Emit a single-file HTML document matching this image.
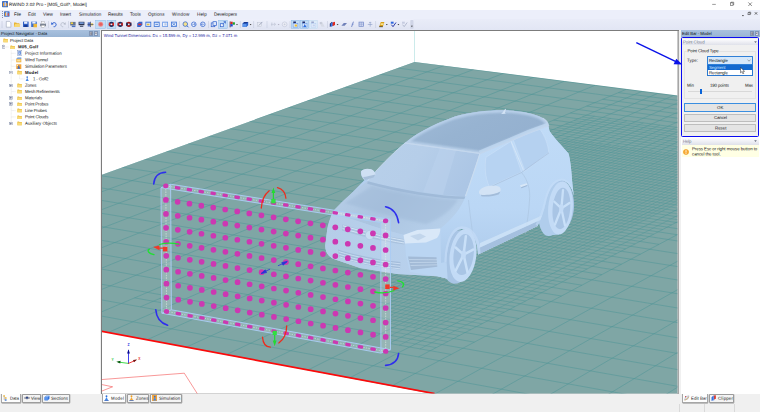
<!DOCTYPE html>
<html><head><meta charset="utf-8"><title>RWIND</title>
<style>
html,body{margin:0;padding:0;}
body{width:760px;height:412px;overflow:hidden;background:#f0f0f0;font-family:"Liberation Sans",sans-serif;position:relative;}
.vp{position:absolute;left:0;top:0;}
.abs{position:absolute;}
.t{position:absolute;white-space:nowrap;text-rendering:geometricPrecision;transform:rotate(0.03deg);}
</style></head><body>
<div class="abs" style="left:0.00px;top:0.00px;width:760.00px;height:9.60px;background:#fff;"></div>
<svg class="abs" style="left:1.8px;top:1.4px" width="6.2" height="6.4" viewBox="0 0 12 12"><rect x="0" y="0" width="12" height="12" rx="1.5" fill="#3f6fc4"/><rect x="2" y="3" width="2.2" height="7" fill="#f0a030"/><rect x="5" y="1.5" width="2.2" height="8.5" fill="#e8e8ff"/><rect x="8" y="4" width="2.2" height="6" fill="#f0a030"/></svg>
<span class="t" style="top:1px;transform:translateY(0.94px) rotate(0.03deg);font-size:4.6px;line-height:5.52px;color:#111;left:9.30px;letter-spacing:0.005px;">RWIND 2.02 Pro - [M05_Golf*, Model]</span>
<svg class="abs" style="left:705px;top:0" width="55" height="9" viewBox="0 0 55 9"><path d="M7.2 4.4H10.8" stroke="#222" stroke-width="0.45"/><rect x="25.3" y="2.9" width="2.7" height="2.7" fill="none" stroke="#222" stroke-width="0.45"/><path d="M26 2.9V2.2H28.7V4.9H28" fill="none" stroke="#222" stroke-width="0.45"/><path d="M43.3 2.4L46.9 6M46.9 2.4L43.3 6" stroke="#222" stroke-width="0.5"/></svg>
<div class="abs" style="left:0.00px;top:9.60px;width:760.00px;height:9.60px;background:#eceffa;"></div>
<div class="abs" style="left:1.60px;top:10.80px;width:0.60px;height:7.00px;border-left:0.5px dotted #8a93b0;"></div>
<svg class="abs" style="left:4.2px;top:11px" width="5.6" height="6" viewBox="0 0 12 12"><rect x="0" y="0" width="12" height="12" rx="1.5" fill="#4a78c8"/><rect x="2" y="3" width="2.2" height="7" fill="#f0a030"/><rect x="5" y="1.5" width="2.2" height="8.5" fill="#f0f0ff"/><rect x="8" y="4" width="2.2" height="6" fill="#e8503a"/></svg>
<span class="t" style="top:11px;transform:translateY(0.84px) rotate(0.03deg);font-size:4.6px;line-height:5.52px;color:#111;left:13.90px;letter-spacing:-0.127px;">File</span>
<span class="t" style="top:11px;transform:translateY(0.84px) rotate(0.03deg);font-size:4.6px;line-height:5.52px;color:#111;left:28.00px;letter-spacing:-0.006px;">Edit</span>
<span class="t" style="top:11px;transform:translateY(0.84px) rotate(0.03deg);font-size:4.6px;line-height:5.52px;color:#111;left:43.00px;letter-spacing:-0.019px;">View</span>
<span class="t" style="top:11px;transform:translateY(0.84px) rotate(0.03deg);font-size:4.6px;line-height:5.52px;color:#111;left:59.80px;letter-spacing:-0.117px;">Insert</span>
<span class="t" style="top:11px;transform:translateY(0.84px) rotate(0.03deg);font-size:4.6px;line-height:5.52px;color:#111;left:78.60px;letter-spacing:0.104px;">Simulation</span>
<span class="t" style="top:11px;transform:translateY(0.84px) rotate(0.03deg);font-size:4.6px;line-height:5.52px;color:#111;left:108.30px;letter-spacing:-0.090px;">Results</span>
<span class="t" style="top:11px;transform:translateY(0.84px) rotate(0.03deg);font-size:4.6px;line-height:5.52px;color:#111;left:130.30px;letter-spacing:-0.007px;">Tools</span>
<span class="t" style="top:11px;transform:translateY(0.84px) rotate(0.03deg);font-size:4.6px;line-height:5.52px;color:#111;left:148.30px;letter-spacing:0.122px;">Options</span>
<span class="t" style="top:11px;transform:translateY(0.84px) rotate(0.03deg);font-size:4.6px;line-height:5.52px;color:#111;left:172.00px;letter-spacing:0.192px;">Window</span>
<span class="t" style="top:11px;transform:translateY(0.84px) rotate(0.03deg);font-size:4.6px;line-height:5.52px;color:#111;left:196.60px;letter-spacing:0.111px;">Help</span>
<span class="t" style="top:11px;transform:translateY(0.84px) rotate(0.03deg);font-size:4.6px;line-height:5.52px;color:#111;left:213.80px;letter-spacing:-0.025px;">Developers</span>
<svg class="abs" style="left:738px;top:10px" width="22" height="8" viewBox="0 0 22 8"><path d="M4 5.6H5.8" stroke="#222" stroke-width="0.7"/><rect x="10" y="2.8" width="2" height="2" fill="none" stroke="#222" stroke-width="0.45"/><path d="M10.7 2.8V2.1H12.7V4.1H12" fill="none" stroke="#222" stroke-width="0.45"/><path d="M16.8 2.2L19.2 4.6M19.2 2.2L16.8 4.6" stroke="#222" stroke-width="0.6"/></svg>
<div class="abs" style="left:0.00px;top:19.20px;width:760.00px;height:10.40px;background:linear-gradient(#e9ecf8,#e2e6f4);"></div>
<div class="abs" style="left:0.00px;top:19.40px;width:414.00px;height:10.00px;background:linear-gradient(#eef0fb,#dfe3f2);border-radius:0 1.5px 1.5px 0;"></div>
<svg class="abs" style="left:0;top:19px" width="420" height="11" viewBox="0 19 420 11"><path d="M2 21V28" stroke="#8a93b0" stroke-width="0.5" stroke-dasharray="0.5 0.5"/><g transform="translate(5.3 21.1)"><path d="M1 0.3H4.2L5.6 1.7V6.1H1Z" fill="#fff" stroke="#7f8aa3" stroke-width="0.45"/></g><g transform="translate(13.8 21.1)"><path d="M0.2 1.4H2.4L3 2.1H5.6V5.8H0.2Z" fill="#e9b537"/><path d="M0.2 5.8L1.4 3H6.6L5.6 5.8Z" fill="#f7d772"/></g><g transform="translate(22.6 21.1)"><rect x="0.4" y="0.5" width="5.6" height="5.4" fill="#2f5fc6"/><rect x="1.5" y="0.5" width="3.3" height="2.2" fill="#e8eefc"/><rect x="1.6" y="3.8" width="3.2" height="2.1" fill="#1a3a90"/></g><g transform="translate(30.8 21.1)"><rect x="0.4" y="0.5" width="5.6" height="5.4" fill="#3b6fd0"/><rect x="1.5" y="0.5" width="3.3" height="2" fill="#e8eefc"/><rect x="2.6" y="2.8" width="3.6" height="3.4" fill="#f0b838"/></g><g transform="translate(39.8 21.1)"><rect x="0.3" y="2.3" width="5.9" height="2.8" rx="0.5" fill="#7b8494"/><rect x="1.5" y="0.6" width="3.5" height="2" fill="#f4f4f8" stroke="#888" stroke-width="0.3"/><rect x="1.5" y="4.2" width="3.5" height="1.9" fill="#fff" stroke="#888" stroke-width="0.3"/></g><path d="M48.5 21V28" stroke="#b4bbd0" stroke-width="0.4"/><g transform="translate(50.8 21.1)"><path d="M1.3 2.6C2.6 0.8 5.6 1.4 5.3 3.8C5.1 5.2 3.8 5.8 2.8 5.6" fill="none" stroke="#2b5fd0" stroke-width="1"/><path d="M0.3 1.2L0.6 3.9L3 2.9Z" fill="#2b5fd0"/></g><g transform="translate(59.8 21.1)"><path d="M5 2.6C3.7 0.8 0.9 1.4 1.1 3.8C1.3 5.2 2.5 5.8 3.4 5.6" fill="none" stroke="#b6bccb" stroke-width="0.9"/><path d="M6 1.2L5.7 3.9L3.3 2.9Z" fill="#b6bccb"/></g><path d="M68.5 21V28" stroke="#b4bbd0" stroke-width="0.4"/><g transform="translate(69.8 21.1)"><rect x="0.4" y="0.8" width="5.4" height="3.6" fill="#6a7890"/><rect x="1" y="1.3" width="2.2" height="1.6" fill="#f0d040"/><rect x="2" y="4.6" width="3.6" height="1.4" fill="#4a70c0"/></g><g transform="translate(78.3 21.1)"><rect x="0.3" y="0.7" width="5.8" height="3.4" fill="#2b3550"/><rect x="1" y="1.2" width="4.4" height="1.6" fill="#7aa0e0"/><rect x="1.6" y="4.5" width="3.4" height="1.4" fill="#596580"/></g><g transform="translate(87.3 21.1)"><rect x="0.4" y="1.2" width="2.4" height="4.2" fill="#5a78c8"/><rect x="3.4" y="2.2" width="2.4" height="2.2" fill="#e8cc58"/><rect x="2.7" y="0.6" width="0.7" height="5.4" fill="#3a4260"/><rect x="0.2" y="2.9" width="6" height="0.6" fill="#3a4260"/></g><rect x="95.7" y="20.2" width="10.099999999999994" height="8.4" fill="#c2dcf5" stroke="#7fb2e4" stroke-width="0.4"/><g transform="translate(97.5 21.1)"><circle cx="3.2" cy="3.2" r="2.5" fill="#ec8a8a"/><circle cx="3.2" cy="3.2" r="1.5" fill="#e66060"/></g><rect x="107" y="20.2" width="8.900000000000006" height="8.4" fill="#c2dcf5" stroke="#7fb2e4" stroke-width="0.4"/><g transform="translate(108.2 21.1)"><circle cx="3.2" cy="3.2" r="2.6" fill="#1c2a5c"/><path d="M3.2 3.2L5.8 1.2L5.8 5.2Z" fill="#d02828"/><path d="M3.2 3.2L0.6 1.2L0.6 5.2Z" fill="#d02828"/><circle cx="3.2" cy="3.2" r="0.9" fill="#e8e8f4"/></g><g transform="translate(117.0 21.1)"><circle cx="3.2" cy="3.2" r="2.6" fill="#1c2a5c"/><path d="M3.2 3.2L5.8 1.2L5.8 5.2Z" fill="#c02020"/><path d="M3.2 3.2L0.6 1.2L0.6 5.2Z" fill="#c02020"/><circle cx="3.2" cy="3.2" r="0.9" fill="#e8e8f4"/></g><g transform="translate(125.60000000000001 21.1)"><circle cx="3.2" cy="3.2" r="2.6" fill="#a01818"/><path d="M3.2 3.2L5.8 1.2L5.8 5.2Z" fill="#1c2a5c"/><path d="M3.2 3.2L0.6 1.2L0.6 5.2Z" fill="#1c2a5c"/><circle cx="3.2" cy="3.2" r="0.9" fill="#e8e8f4"/></g><path d="M134 21V28" stroke="#b4bbd0" stroke-width="0.4"/><g transform="translate(136.60000000000002 21.1)"><path d="M0.6 2.2L2.6 0.6H5.8V4L3.8 5.8H0.6Z" fill="#3a66cc"/><rect x="1.6" y="2.6" width="3.2" height="1.4" fill="#e03030"/></g><g transform="translate(145.0 21.1)"><rect x="0.4" y="0.6" width="5.8" height="5.2" fill="#3e74d6"/><rect x="1.2" y="1.6" width="4.2" height="3.4" fill="#dfe9fb"/><rect x="1.8" y="2.6" width="2.6" height="1.6" fill="#e8c040"/></g><g transform="translate(153.4 21.1)"><rect x="0.4" y="0.6" width="5.8" height="5.2" fill="#3e74d6"/><rect x="1.2" y="1.6" width="4.2" height="3.4" fill="#dfe9fb"/><path d="M2 3.3H4.6" stroke="#3e74d6" stroke-width="0.8"/></g><g transform="translate(161.8 21.1)"><rect x="0.4" y="0.6" width="5.8" height="5.2" fill="#6a98e6"/><rect x="1.2" y="1.6" width="4.2" height="3.4" fill="#eef3fd"/><rect x="2.6" y="2.2" width="2.2" height="2.2" fill="#b8c8e8"/></g><g transform="translate(170.60000000000002 21.1)"><rect x="0.4" y="0.6" width="5.8" height="5.2" fill="#3e74d6"/><rect x="1.2" y="1.4" width="4.2" height="3.6" fill="#e8effc"/><path d="M1.6 1.8L5 4.6M5 1.8L1.6 4.6" stroke="#3e74d6" stroke-width="0.7"/></g><path d="M179.5 21V28" stroke="#b4bbd0" stroke-width="0.4"/><g transform="translate(182.3 21.1)"><circle cx="3" cy="3" r="2.3" fill="#f4e08a" stroke="#3c6cd0" stroke-width="0.8"/><path d="M4.6 4.6L6.2 6.2" stroke="#3c6cd0" stroke-width="1"/></g><g transform="translate(190.60000000000002 21.1)"><circle cx="3.2" cy="3.2" r="2.3" fill="#f0f4fc" stroke="#3c6cd0" stroke-width="0.8"/><path d="M1.6 3.2H4.6M3.4 2L4.8 3.2L3.4 4.4" stroke="#3c6cd0" stroke-width="0.6" fill="none"/></g><g transform="translate(199.60000000000002 21.1)"><circle cx="3.2" cy="3.2" r="2.3" fill="#f0f4fc" stroke="#3c6cd0" stroke-width="0.8"/><path d="M4.8 3.2H1.8M3 2L1.6 3.2L3 4.4" stroke="#3c6cd0" stroke-width="0.6" fill="none"/></g><path d="M208.5 21V28" stroke="#b4bbd0" stroke-width="0.4"/><g transform="translate(210.8 21.1)"><rect x="0.4" y="1.8" width="3.6" height="3.8" fill="none" stroke="#2f62cc" stroke-width="0.7"/><rect x="2.2" y="0.6" width="3.6" height="3.8" fill="#dfe8fa" stroke="#2f62cc" stroke-width="0.7"/></g><rect x="218.5" y="20.2" width="8.800000000000011" height="8.4" fill="#c2dcf5" stroke="#7fb2e4" stroke-width="0.4"/><g transform="translate(219.70000000000002 21.1)"><rect x="0.6" y="2.6" width="3" height="3" fill="#eef3fd" stroke="#2f62cc" stroke-width="0.7"/><path d="M3 3L5.6 0.6M5.8 2.4V0.5H3.9" stroke="#2f62cc" stroke-width="0.7" fill="none"/></g><g transform="translate(229.10000000000002 21.1)"><rect x="0.6" y="0.4" width="0.8" height="5.8" fill="#222"/><rect x="1.4" y="0.6" width="2.2" height="2.4" fill="#e02020"/><rect x="3.6" y="1.2" width="2.2" height="2.4" fill="#18a030"/><rect x="1.4" y="3" width="2.2" height="2.4" fill="#2040d8"/></g><path d="M236.1 24.1H237.9L237 25.2Z" fill="#333"/><path d="M240.3 21V28" stroke="#b4bbd0" stroke-width="0.4"/><g transform="translate(242.20000000000002 21.1)"><path d="M0.4 2.4L2.2 0.8H6V4.2L4.2 5.8H0.4Z" fill="#2d66cf"/><path d="M0.4 2.4H4.2V5.8H0.4Z" fill="#5c95ec"/><path d="M0.4 2.4L2.2 0.8H6L4.2 2.4Z" fill="#16358c"/></g><path d="M249.7 24.1H251.5L250.6 25.2Z" fill="#333"/><path d="M253.6 21V28" stroke="#b4bbd0" stroke-width="0.4"/><g transform="translate(256.8 21.1)"><rect x="0.4" y="1.6" width="4.6" height="4" fill="#e8ebf4" stroke="#b3bacb" stroke-width="0.4"/><path d="M2 4.4L5.6 0.8" stroke="#9aa3ba" stroke-width="0.9"/></g><path d="M267 21V28" stroke="#b4bbd0" stroke-width="0.4"/><g transform="translate(270.40000000000003 21.1)"><path d="M0.6 3.2H5M3.6 1.8L5.2 3.2L3.6 4.6M1.4 1.4V5" stroke="#b9bfd0" stroke-width="0.6" fill="none"/></g><path d="M277.70000000000005 24.1H279.5L278.6 25.2Z" fill="#aab"/><g transform="translate(281.40000000000003 21.1)"><circle cx="3.2" cy="3.2" r="2.4" fill="#eceef6" stroke="#c0c5d6" stroke-width="0.6"/><circle cx="3.2" cy="3.2" r="0.9" fill="#c8cddc"/></g><path d="M290 21V28" stroke="#b4bbd0" stroke-width="0.4"/><rect x="291.2" y="20.2" width="8.400000000000034" height="8.4" fill="#c2dcf5" stroke="#7fb2e4" stroke-width="0.4"/><g transform="translate(292.3 21.1)"><rect x="1" y="0.4" width="2.6" height="1.8" fill="#1c2a6c"/><rect x="0.8" y="2.4" width="4.8" height="3.6" fill="#dbe7fa" stroke="#4a80dc" stroke-width="0.4"/><rect x="2.4" y="3.4" width="2.4" height="2" fill="#f2c230"/></g><rect x="300.3" y="20.2" width="8.300000000000011" height="8.4" fill="#c2dcf5" stroke="#7fb2e4" stroke-width="0.4"/><g transform="translate(301.40000000000003 21.1)"><rect x="1" y="0.4" width="2.6" height="1.8" fill="#1c2a6c"/><rect x="0.8" y="2.4" width="4.8" height="3.6" fill="#dbe7fa" stroke="#4a80dc" stroke-width="0.4"/><path d="M3.4 2.8L5 5.8H1.8Z" fill="#2f6fe0"/></g><rect x="309.4" y="20.2" width="8.0" height="8.4" fill="#dcebf9" stroke="#b9d4ee" stroke-width="0.4"/><g transform="translate(310.3 21.1)"><rect x="1" y="0.4" width="2.6" height="1.8" fill="#9aa6cc"/><rect x="0.8" y="2.4" width="4.8" height="3.6" fill="#e6eefb" stroke="#a8c4ee" stroke-width="0.4"/><rect x="2.4" y="3.4" width="2.2" height="1.8" fill="#c4d4ee"/></g><g transform="translate(318.8 21.1)"><path d="M1 1.4C2 0.4 3.6 0.6 4 1.8L5.8 5.6H2.6Z" fill="#d7dbe6"/><circle cx="2" cy="2" r="1.2" fill="#c5cad8"/></g><path d="M327.5 21V28" stroke="#b4bbd0" stroke-width="0.4"/><g transform="translate(329.2 21.1)"><path d="M0.6 2.6L2.8 0.6V4.4L0.6 6Z" fill="#1c2a6c"/><path d="M1.6 2.4L4 0.6V4.6L1.6 6Z" fill="#3a7be8"/><path d="M3.4 1.4L5.8 0.6V4L3.4 5.2Z" fill="#e02a1c"/></g><path d="M336.70000000000005 24.1H338.5L337.6 25.2Z" fill="#333"/><g transform="translate(341.0 21.1)"><path d="M0.4 4.6L2.8 1.8H6L3.6 4.6Z" fill="#6f80b8"/></g><g transform="translate(349.40000000000003 21.1)"><path d="M2.2 5.8L4 0.6" stroke="#6a80c4" stroke-width="0.9"/><path d="M2.2 3.2H4.4" stroke="#7a90d0" stroke-width="0.5"/></g><g transform="translate(358.2 21.1)"><rect x="0.8" y="1" width="4.6" height="4.2" fill="#d4dcf2" stroke="#7086c6" stroke-width="0.7"/><path d="M3.1 1V5.2M0.8 3.1H5.4" stroke="#7086c6" stroke-width="0.4"/></g><g transform="translate(367.0 21.1)"><path d="M0.8 3.4H5.4M3.2 1V5.6M2 2L3.2 0.8L4.4 2" stroke="#8a9cc8" stroke-width="0.6" fill="none"/></g><path d="M375.6 21V28" stroke="#b4bbd0" stroke-width="0.4"/><g transform="translate(378.6 21.1)"><path d="M0.6 5.6L2.2 0.8H5.8L4.2 5.6Z" fill="#d8a018"/><path d="M2.4 2.2H5.2L4.6 4H1.8Z" fill="#f8e088"/><path d="M0.6 5.6H4.2" stroke="#222" stroke-width="0.7"/></g><path d="M385.90000000000003 24.1H387.7L386.8 25.2Z" fill="#333"/><g transform="translate(390.2 21.1)"><rect x="0.6" y="0.6" width="2.8" height="2" fill="#2d66df"/><path d="M1.2 3.6L2.8 5.6L5.8 1.4" stroke="#2a3aa8" stroke-width="1" fill="none"/></g><path d="M397.5 24.1H399.29999999999995L398.4 25.2Z" fill="#333"/><g transform="translate(401.40000000000003 21.1)"><rect x="0.6" y="0.6" width="2.8" height="2" fill="#c6cce0"/><path d="M1.2 3.6L2.8 5.6L5.8 1.4" stroke="#b4bbd0" stroke-width="1" fill="none"/></g><rect x="410.3" y="20" width="3.2" height="8.8" rx="0.8" fill="#cfd4e6"/><path d="M411 25.8H412.8L411.9 26.9Z" fill="#222"/></svg>
<div class="abs" style="left:0.00px;top:30.20px;width:99.60px;height:364.00px;background:#fff;"></div>
<div class="abs" style="left:0.00px;top:30.20px;width:99.60px;height:6.70px;background:linear-gradient(#a9c1de,#98b4d4);"></div>
<span class="t" style="top:30px;transform:translateY(0.96px) rotate(0.03deg);font-size:4.35px;line-height:5.22px;color:#101820;left:1.40px;letter-spacing:-0.003px;">Project Navigator - Data</span>
<div class="abs" style="left:89.30px;top:31.20px;width:4.20px;height:4.60px;background:#e9eef7;border:0.35px solid #8196b6;box-sizing:border-box;"></div>
<div class="abs" style="left:94.30px;top:31.20px;width:4.20px;height:4.60px;background:#e9eef7;border:0.35px solid #8196b6;box-sizing:border-box;"></div>
<svg class="abs" style="left:89.3px;top:31.2px" width="9.2" height="4.6" viewBox="0 0 9.2 4.6"><path d="M1.7 1V3.2M2.6 1V3.2M1.2 3.2H3.1M2.15 3.2V4" stroke="#223" stroke-width="0.4" fill="none"/><path d="M6.2 1.6L7.8 3M7.8 1.6L6.2 3" stroke="#223" stroke-width="0.45"/></svg>
<svg class="abs" style="left:0;top:37px" width="100" height="95" viewBox="0 37 100 95"><path d="M3.5 49V44M11.2 50.5V123.3M11.2 53.3H16M11.2 60H16M11.2 66.3H16M11.2 91.6H16M11.2 110.6H16M11.2 116.9H16M19.5 75.5V78.9H24.5M3.5 47H9" stroke="#b8b8b8" stroke-width="0.35" stroke-dasharray="0.4 0.4" fill="none"/></svg>
<svg class="abs" style="left:2.60px;top:38.40px" width="5.3" height="4.6" viewBox="0 0 12 10.8"><path d="M0.5 2.2 L0.5 10 L11.3 10 L11.3 2.6 L5.6 2.6 L4.6 1 L1.2 1 Z" fill="#ecc04a"/><path d="M0.5 4 L11.3 4 L11.3 10 L0.5 10 Z" fill="#f8da78"/></svg>
<span class="t" style="top:38px;transform:translateY(0.06px) rotate(0.03deg);font-size:4.35px;line-height:5.22px;color:#111;left:9.60px;letter-spacing:-0.059px;">Project Data</span>
<svg class="abs" style="left:1.70px;top:45.20px" width="3.6" height="3.6" viewBox="0 0 9 9"><rect x="0.6" y="0.6" width="7.8" height="7.8" fill="#fff" stroke="#8390aa" stroke-width="1.2"/><path d="M2 4.5H7" stroke="#2a3560" stroke-width="1.3"/></svg>
<svg class="abs" style="left:9.80px;top:44.70px" width="5.3" height="4.6" viewBox="0 0 12 10.8"><path d="M0.5 2.2 L0.5 10 L11.3 10 L11.3 2.6 L5.6 2.6 L4.6 1 L1.2 1 Z" fill="#ecc04a"/><path d="M0.5 4 L11.3 4 L11.3 10 L0.5 10 Z" fill="#f8da78"/></svg>
<span class="t" style="top:44px;transform:translateY(0.36px) rotate(0.03deg);font-size:4.35px;line-height:5.22px;color:#111;font-weight:bold;left:17.50px;letter-spacing:0.079px;">M05_Golf</span>
<svg class="abs" style="left:16.6px;top:50.4px" width="5.2" height="5.8" viewBox="0 0 10 11"><rect x="0.5" y="0.5" width="9" height="10" fill="#fff" stroke="#7a8fb8" stroke-width="0.9"/><rect x="2.8" y="2" width="4.4" height="7" fill="#3b6fd0"/><rect x="4.4" y="4.5" width="1.2" height="3.6" fill="#fff"/><rect x="4.4" y="2.8" width="1.2" height="1.1" fill="#fff"/></svg>
<span class="t" style="top:50px;transform:translateY(0.66px) rotate(0.03deg);font-size:4.35px;line-height:5.22px;color:#111;left:24.60px;letter-spacing:0.007px;">Project Information</span>
<svg class="abs" style="left:16.4px;top:57.2px" width="5.6" height="5.6" viewBox="0 0 10 10"><rect x="0.5" y="3" width="9" height="6.5" fill="#f0b040"/><path d="M0.5 3L3 0.8H9.5V3Z" fill="#5b8fd8"/><rect x="2" y="4.5" width="6" height="3.5" fill="#fbe3a0"/></svg>
<span class="t" style="top:57px;transform:translateY(0.36px) rotate(0.03deg);font-size:4.35px;line-height:5.22px;color:#111;left:24.60px;letter-spacing:-0.114px;">Wind Tunnel</span>
<svg class="abs" style="left:16.4px;top:63.5px" width="5.6" height="5.6" viewBox="0 0 10 10"><rect x="0.5" y="0.5" width="9" height="9" fill="#f3a338"/><path d="M5 2L7.5 8.5H2.5Z" fill="#3768c8"/><rect x="1.5" y="1.5" width="2" height="2" fill="#fff4d0"/></svg>
<span class="t" style="top:63px;transform:translateY(0.66px) rotate(0.03deg);font-size:4.35px;line-height:5.22px;color:#111;left:24.60px;letter-spacing:-0.103px;">Simulation Parameters</span>
<svg class="abs" style="left:9.40px;top:70.80px" width="3.6" height="3.6" viewBox="0 0 9 9"><rect x="0.6" y="0.6" width="7.8" height="7.8" fill="#fff" stroke="#8390aa" stroke-width="1.2"/><path d="M2 4.5H7" stroke="#2a3560" stroke-width="1.3"/></svg>
<svg class="abs" style="left:17.00px;top:70.30px" width="5.3" height="4.6" viewBox="0 0 12 10.8"><path d="M0.5 2.2 L0.5 10 L11.3 10 L11.3 2.6 L5.6 2.6 L4.6 1 L1.2 1 Z" fill="#ecc04a"/><path d="M0.5 4 L11.3 4 L11.3 10 L0.5 10 Z" fill="#f8da78"/></svg>
<span class="t" style="top:69px;transform:translateY(0.96px) rotate(0.03deg);font-size:4.35px;line-height:5.22px;color:#111;font-weight:bold;left:24.60px;letter-spacing:0.167px;">Model</span>
<svg class="abs" style="left:25.2px;top:76.30000000000001px" width="4.4" height="5.2" viewBox="0 0 8 10"><circle cx="4" cy="2.2" r="1.6" fill="#3b78d8"/><path d="M4 3.5L7 9.5H1Z" fill="#4c8be6"/></svg>
<span class="t" style="top:76px;transform:translateY(0.26px) rotate(0.03deg);font-size:4.35px;line-height:5.22px;color:#111;left:32.50px;letter-spacing:-0.153px;">1 - Golf2</span>
<svg class="abs" style="left:9.40px;top:83.50px" width="3.6" height="3.6" viewBox="0 0 9 9"><rect x="0.6" y="0.6" width="7.8" height="7.8" fill="#fff" stroke="#8390aa" stroke-width="1.2"/><path d="M2 4.5H7" stroke="#2a3560" stroke-width="1.3"/><path d="M4.5 2V7" stroke="#2a3560" stroke-width="1.3"/></svg>
<svg class="abs" style="left:17.00px;top:83.00px" width="5.3" height="4.6" viewBox="0 0 12 10.8"><path d="M0.5 2.2 L0.5 10 L11.3 10 L11.3 2.6 L5.6 2.6 L4.6 1 L1.2 1 Z" fill="#ecc04a"/><path d="M0.5 4 L11.3 4 L11.3 10 L0.5 10 Z" fill="#f8da78"/></svg>
<span class="t" style="top:82px;transform:translateY(0.66px) rotate(0.03deg);font-size:4.35px;line-height:5.22px;color:#111;left:24.60px;letter-spacing:-0.176px;">Zones</span>
<svg class="abs" style="left:17.00px;top:89.30px" width="5.3" height="4.6" viewBox="0 0 12 10.8"><path d="M0.5 2.2 L0.5 10 L11.3 10 L11.3 2.6 L5.6 2.6 L4.6 1 L1.2 1 Z" fill="#ecc04a"/><path d="M0.5 4 L11.3 4 L11.3 10 L0.5 10 Z" fill="#f8da78"/></svg>
<span class="t" style="top:88px;transform:translateY(0.96px) rotate(0.03deg);font-size:4.35px;line-height:5.22px;color:#111;left:24.60px;letter-spacing:-0.095px;">Mesh Refinements</span>
<svg class="abs" style="left:9.40px;top:96.10px" width="3.6" height="3.6" viewBox="0 0 9 9"><rect x="0.6" y="0.6" width="7.8" height="7.8" fill="#fff" stroke="#8390aa" stroke-width="1.2"/><path d="M2 4.5H7" stroke="#2a3560" stroke-width="1.3"/><path d="M4.5 2V7" stroke="#2a3560" stroke-width="1.3"/></svg>
<svg class="abs" style="left:17.00px;top:95.60px" width="5.3" height="4.6" viewBox="0 0 12 10.8"><path d="M0.5 2.2 L0.5 10 L11.3 10 L11.3 2.6 L5.6 2.6 L4.6 1 L1.2 1 Z" fill="#ecc04a"/><path d="M0.5 4 L11.3 4 L11.3 10 L0.5 10 Z" fill="#f8da78"/></svg>
<span class="t" style="top:95px;transform:translateY(0.26px) rotate(0.03deg);font-size:4.35px;line-height:5.22px;color:#111;left:24.60px;letter-spacing:-0.070px;">Materials</span>
<svg class="abs" style="left:9.40px;top:102.40px" width="3.6" height="3.6" viewBox="0 0 9 9"><rect x="0.6" y="0.6" width="7.8" height="7.8" fill="#fff" stroke="#8390aa" stroke-width="1.2"/><path d="M2 4.5H7" stroke="#2a3560" stroke-width="1.3"/><path d="M4.5 2V7" stroke="#2a3560" stroke-width="1.3"/></svg>
<svg class="abs" style="left:17.00px;top:101.90px" width="5.3" height="4.6" viewBox="0 0 12 10.8"><path d="M0.5 2.2 L0.5 10 L11.3 10 L11.3 2.6 L5.6 2.6 L4.6 1 L1.2 1 Z" fill="#ecc04a"/><path d="M0.5 4 L11.3 4 L11.3 10 L0.5 10 Z" fill="#f8da78"/></svg>
<span class="t" style="top:101px;transform:translateY(0.56px) rotate(0.03deg);font-size:4.35px;line-height:5.22px;color:#111;left:24.60px;letter-spacing:-0.131px;">Point Probes</span>
<svg class="abs" style="left:17.00px;top:108.30px" width="5.3" height="4.6" viewBox="0 0 12 10.8"><path d="M0.5 2.2 L0.5 10 L11.3 10 L11.3 2.6 L5.6 2.6 L4.6 1 L1.2 1 Z" fill="#ecc04a"/><path d="M0.5 4 L11.3 4 L11.3 10 L0.5 10 Z" fill="#f8da78"/></svg>
<span class="t" style="top:107px;transform:translateY(0.96px) rotate(0.03deg);font-size:4.35px;line-height:5.22px;color:#111;left:24.60px;letter-spacing:-0.126px;">Line Probes</span>
<svg class="abs" style="left:17.00px;top:114.60px" width="5.3" height="4.6" viewBox="0 0 12 10.8"><path d="M0.5 2.2 L0.5 10 L11.3 10 L11.3 2.6 L5.6 2.6 L4.6 1 L1.2 1 Z" fill="#ecc04a"/><path d="M0.5 4 L11.3 4 L11.3 10 L0.5 10 Z" fill="#f8da78"/></svg>
<span class="t" style="top:114px;transform:translateY(0.26px) rotate(0.03deg);font-size:4.35px;line-height:5.22px;color:#111;left:24.60px;letter-spacing:-0.120px;">Point Clouds</span>
<svg class="abs" style="left:9.40px;top:121.50px" width="3.6" height="3.6" viewBox="0 0 9 9"><rect x="0.6" y="0.6" width="7.8" height="7.8" fill="#fff" stroke="#8390aa" stroke-width="1.2"/><path d="M2 4.5H7" stroke="#2a3560" stroke-width="1.3"/><path d="M4.5 2V7" stroke="#2a3560" stroke-width="1.3"/></svg>
<svg class="abs" style="left:17.00px;top:121.00px" width="5.3" height="4.6" viewBox="0 0 12 10.8"><path d="M0.5 2.2 L0.5 10 L11.3 10 L11.3 2.6 L5.6 2.6 L4.6 1 L1.2 1 Z" fill="#ecc04a"/><path d="M0.5 4 L11.3 4 L11.3 10 L0.5 10 Z" fill="#f8da78"/></svg>
<span class="t" style="top:120px;transform:translateY(0.66px) rotate(0.03deg);font-size:4.35px;line-height:5.22px;color:#111;left:24.60px;letter-spacing:-0.021px;">Auxiliary Objects</span>
<div class="abs" style="left:99.60px;top:30.20px;width:1.40px;height:364.00px;background:#f0f0f0;"></div>
<div class="abs" style="left:101.00px;top:29.80px;width:578.40px;height:364.20px;background:#a6a6a6;"></div>
<div class="abs" style="left:101.00px;top:29.80px;width:578.40px;height:1.20px;background:#7c7c7c;"></div>
<div class="abs" style="left:101.00px;top:29.80px;width:1.00px;height:364.20px;background:#7c7c7c;"></div>

<svg class="vp" width="760" height="412" viewBox="0 0 760 412">
<defs>
<clipPath id="vpc"><rect x="102" y="31" width="575.4" height="362.4"/></clipPath>
<clipPath id="flc"><polygon points="414.5,61.9 679,95.6 679,394 433.6,394 101,331.1 101,175.1"/></clipPath>
<clipPath id="flc2"><path clip-rule="evenodd" d="M414.5 61.9L679 95.6L679 394L433.6 394L101 331.1L101 175.1ZM161 187.6L170.6 184.2L390.4 219.2L390.5 349.7L380.9 353.1L162 313.2Z"/></clipPath>
</defs>
<g clip-path="url(#vpc)">
<rect x="102" y="31" width="577" height="363" fill="#fff"/>
<line x1="414.5" y1="30" x2="414.5" y2="62" stroke="#bfe6e6" stroke-width="0.8"/>
<polygon points="414.5,61.9 679,95.6 679,394 433.6,394 101,331.1 101,175.1" fill="#7fa6a5"/>
<g clip-path="url(#flc)" fill="none" stroke="#4c9597" stroke-width="0.5">
<path d="M414.5 61.9L-187.64 279.06M443.82 65.7L-152.69 285.56M473.44 69.55L-117.26 292.15M503.36 73.43L-81.36 298.82M533.59 77.35L-44.98 305.59M564.12 81.31L-8.09 312.45M594.97 85.31L29.3 319.4M626.13 89.35L67.22 326.45M657.62 93.44L105.66 333.59M689.44 97.57L144.64 340.84M721.59 101.74L184.17 348.19M754.08 105.95L224.27 355.65M786.91 110.21L264.94 363.21M820.09 114.52L306.2 370.88M853.63 118.87L348.06 378.66M887.53 123.26L390.54 386.56M921.8 127.71L433.64 394.58M956.44 132.2L477.39 402.71M991.46 136.75L521.79 410.97M1026.87 141.34L566.86 419.35M1062.66 145.98L612.62 427.85M1098.86 150.68L659.08 436.49M1135.46 155.43L706.26 445.26M1172.47 160.23L754.18 454.17M1209.9 165.08L802.85 463.22M414.5 61.9L1209.9 165.08M397.53 68.02L1198.93 173.12M380.25 74.25L1187.72 181.33M362.64 80.6L1176.27 189.72M344.7 87.07L1164.58 198.28M326.42 93.67L1152.63 207.03M307.79 100.39L1140.42 215.98M288.79 107.24L1127.93 225.12M269.42 114.22L1115.16 234.48M249.66 121.35L1102.1 244.04M229.51 128.62L1088.74 253.83M208.95 136.03L1075.07 263.84M187.97 143.6L1061.07 274.09M166.55 151.32L1046.74 284.59M144.69 159.21L1032.06 295.34M122.36 167.26L1017.02 306.36M99.56 175.48L1001.61 317.64M76.27 183.88L985.81 329.22M52.47 192.47L969.61 341.08M28.14 201.24L952.99 353.25M3.27 210.21L935.94 365.74M-22.16 219.38L918.44 378.56M-48.17 228.76L900.46 391.73M-74.77 238.36L882 405.25M-102 248.18L863.03 419.14M-129.88 258.23L843.53 433.43M-158.41 268.52L823.48 448.11M-187.64 279.06L802.85 463.22"/>
</g>
<g clip-path="url(#flc2)" fill="none" stroke="#4c9597" stroke-width="0.5">
<path d="M641.83 91.39L140.28 306.85M673.49 95.5L178.39 313.71M705.47 99.65L217.02 320.66M737.79 103.84L256.19 327.71M770.45 108.08L295.91 334.86M803.46 112.36L336.18 342.11M836.82 116.69L377.02 349.46M870.54 121.06L418.45 356.92M618.38 92.64L880.74 126.86M602.67 99.31L866.96 134.16M586.64 106.1L852.9 141.61M570.31 113.03L838.55 149.21M553.65 120.1L823.91 156.97M536.66 127.31L808.96 164.89M519.33 134.66L793.7 172.97M501.65 142.16L778.11 181.23M483.6 149.81L762.19 189.67M465.18 157.63L745.92 198.29M446.38 165.61L729.3 207.09M427.17 173.75L712.3 216.1M407.55 182.08L694.92 225.3M387.51 190.58L677.15 234.72M367.03 199.26L658.97 244.35M346.1 208.14L640.37 254.21M324.7 217.22L621.33 264.29M302.81 226.51L601.83 274.62M280.42 236L581.87 285.2M257.52 245.72L561.42 296.03M234.08 255.66L540.46 307.14M210.08 265.84L518.98 318.51M185.5 276.27L496.96 330.18M160.33 286.95L474.37 342.15M134.55 297.89L451.2 354.43"/>
<path d="M594.48 116.29L162.78 302.93M610.7 118.48L181.76 306.32M627.01 120.68L200.87 309.73M643.41 122.89L220.11 313.16M659.9 125.12L239.48 316.62M676.47 127.35L258.99 320.11M693.14 129.6L278.63 323.61M709.9 131.86L298.4 327.14M726.74 134.13L318.32 330.7M743.69 136.42L338.37 334.28M760.72 138.71L358.56 337.89M777.85 141.02L378.89 341.52M795.07 143.35L399.37 345.17M812.39 145.68L419.99 348.85M582.3 116.97L817.42 148.77M574.02 120.52L810.03 152.63M565.67 124.11L802.57 156.52M557.23 127.73L795.02 160.46M548.71 131.39L787.4 164.43M540.11 135.09L779.7 168.45M531.41 138.83L771.91 172.51M522.63 142.6L764.05 176.62M513.76 146.41L756.1 180.76M504.8 150.26L748.06 184.95M495.74 154.15L739.94 189.19M486.59 158.08L731.74 193.47M477.35 162.05L723.44 197.8M468 166.07L715.05 202.18M458.56 170.12L706.57 206.6M449.02 174.22L697.99 211.08M439.38 178.36L689.33 215.6M429.63 182.55L680.56 220.17M419.78 186.78L671.69 224.8M409.83 191.06L662.73 229.47M399.76 195.38L653.66 234.2M389.59 199.75L644.49 238.99M379.3 204.17L635.22 243.83M368.9 208.64L625.83 248.72M358.38 213.16L616.34 253.67M347.74 217.73L606.74 258.68M336.99 222.35L597.02 263.75M326.11 227.02L587.19 268.88M315.11 231.74L577.25 274.07M303.99 236.52L567.18 279.32M292.73 241.36L556.99 284.64M281.35 246.25L546.68 290.02M269.83 251.2L536.24 295.46M258.18 256.2L525.68 300.97M246.39 261.27L514.98 306.55M234.46 266.39L504.15 312.2M222.39 271.58L493.19 317.92M210.17 276.82L482.09 323.72M197.81 282.14L470.85 329.58M185.3 287.51L459.46 335.52M172.63 292.95L447.93 341.54M159.81 298.46L436.25 347.63" stroke-width="0.42"/>
<path d="M569.04 139.12L218.17 293.27M577.36 140.28L227.63 294.92M585.7 141.44L237.12 296.59M594.07 142.6L246.65 298.25M602.45 143.77L256.2 299.93M610.87 144.94L265.79 301.61M619.3 146.12L275.42 303.29M627.76 147.3L285.07 304.98M636.24 148.48L294.76 306.68M644.75 149.66L304.48 308.38M653.28 150.85L314.23 310.09M661.83 152.04L324.02 311.8M670.41 153.23L333.84 313.52M679.01 154.43L343.69 315.25M687.63 155.63L353.57 316.98M696.29 156.84L363.5 318.72M704.96 158.04L373.45 320.46M713.66 159.26L383.44 322.21M722.38 160.47L393.46 323.96M731.13 161.69L403.52 325.72M739.91 162.91L413.61 327.49M748.7 164.14L423.74 329.26" stroke-width="0.4" stroke-opacity="0.85"/>
<path d="M562.75 139.48L751.15 165.75M558.45 141.36L747.2 167.76M554.12 143.26L743.24 169.79M549.78 145.16L739.25 171.82M545.41 147.07L735.25 173.86M541.02 149L731.22 175.92M536.6 150.93L727.17 177.98M532.17 152.87L723.1 180.06M527.71 154.82L719 182.15M523.23 156.79L714.89 184.25M518.72 158.76L710.75 186.36M514.19 160.74L706.59 188.48M509.64 162.74L702.41 190.61M505.07 164.74L698.21 192.75M500.47 166.75L693.98 194.91M495.84 168.78L689.73 197.08M491.19 170.81L685.46 199.26M486.52 172.86L681.16 201.45M481.82 174.92L676.84 203.65M477.1 176.99L672.5 205.87M472.35 179.07L668.13 208.09M467.58 181.16L663.74 210.33M462.78 183.26L659.32 212.59M457.95 185.37L654.88 214.85M453.1 187.49L650.42 217.13M448.23 189.63L645.93 219.42M443.32 191.78L641.41 221.72M438.39 193.94L636.87 224.04M433.43 196.11L632.31 226.37M428.45 198.29L627.71 228.71M423.44 200.48L623.1 231.06M418.4 202.69L618.45 233.43M413.33 204.91L613.78 235.81M408.24 207.14L609.08 238.21M403.12 209.38L604.36 240.62M397.97 211.64L599.61 243.04M392.79 213.91L594.83 245.48M387.58 216.19L590.03 247.93M382.34 218.48L585.19 250.4M377.07 220.79L580.33 252.88M371.78 223.11L575.44 255.37M366.45 225.44L570.52 257.88M361.09 227.79L565.57 260.4M355.7 230.15L560.6 262.94M350.29 232.52L555.59 265.49M344.84 234.9L550.55 268.06M339.36 237.3L545.49 270.65M333.85 239.72L540.39 273.25M328.3 242.14L535.27 275.86M322.73 244.59L530.11 278.49M317.12 247.04L524.92 281.14M311.48 249.51L519.7 283.8M305.81 252L514.45 286.48M300.1 254.49L509.17 289.17M294.36 257.01L503.85 291.88M288.59 259.54L498.51 294.61M282.78 262.08L493.13 297.35M276.94 264.64L487.72 300.11M271.06 267.21L482.27 302.89M265.15 269.8L476.79 305.68M259.2 272.4L471.28 308.5M253.22 275.02L465.73 311.33M247.2 277.66L460.15 314.17M241.15 280.31L454.53 317.04M235.06 282.98L448.88 319.92M228.93 285.66L443.19 322.82M222.76 288.36L437.47 325.74M216.56 291.08L431.71 328.68" stroke-width="0.3" stroke-opacity="0.13"/>
</g>
<defs>
<linearGradient id="gRoof" x1="0" y1="0" x2="1" y2="0.6"><stop offset="0" stop-color="#a0bbd8"/><stop offset="0.5" stop-color="#97b3d1"/><stop offset="1" stop-color="#94b0cf"/></linearGradient>
<linearGradient id="gHood" x1="0" y1="0" x2="1" y2="0.4"><stop offset="0" stop-color="#b9d0e9"/><stop offset="0.5" stop-color="#abc4e0"/><stop offset="1" stop-color="#b6cfea"/></linearGradient>
<linearGradient id="gSide" x1="0" y1="0" x2="0" y2="1"><stop offset="0" stop-color="#c0dbf7"/><stop offset="0.6" stop-color="#bbd7f5"/><stop offset="1" stop-color="#aecbeb"/></linearGradient>
<linearGradient id="gWs" x1="0" y1="0" x2="1" y2="0.3"><stop offset="0" stop-color="#b8d0ea"/><stop offset="0.5" stop-color="#b6cee9"/><stop offset="1" stop-color="#acc6e5"/></linearGradient>
<linearGradient id="gFront" x1="0" y1="0" x2="1" y2="0"><stop offset="0" stop-color="#b5cde8"/><stop offset="1" stop-color="#b9d2ee"/></linearGradient>
<radialGradient id="gWheel" cx="0.5" cy="0.5" r="0.6"><stop offset="0" stop-color="#a9c1dc"/><stop offset="0.7" stop-color="#bcd2ea"/><stop offset="1" stop-color="#cbdef3"/></radialGradient>
<filter id="bl" x="-10%" y="-10%" width="120%" height="120%"><feGaussianBlur stdDeviation="0.5"/></filter>
<filter id="bl2" x="-20%" y="-20%" width="140%" height="140%"><feGaussianBlur stdDeviation="1.2"/></filter>
</defs>
<g>
<ellipse cx="560.5" cy="205" rx="13.6" ry="25" fill="#a9c5e5"/>
<ellipse cx="550.5" cy="209.6" rx="12.3" ry="26.6" fill="#b0cdec" transform="rotate(5 550.5 209.6)"/><path d="M549 235.5L559 234.6L561 181.6L551 183Z" fill="#b0cdec"/>
<ellipse cx="560.5" cy="208" rx="12.3" ry="26.7" fill="#c3dbf6" transform="rotate(5 560.5 208)"/>
<ellipse cx="561.4" cy="208.4" rx="8.8" ry="20.8" fill="#a9c5e5" transform="rotate(5 561.4 208.4)"/>
<g transform="rotate(5 561.4 208.4)" stroke="#c9e0f8" stroke-width="2.3" stroke-linecap="round"><path d="M561.4 208.4L561.4 190M561.4 208.4L569 202.4M561.4 208.4L566.4 225M561.4 208.4L556.4 225M561.4 208.4L553.8 202.4"/></g>
<ellipse cx="561.4" cy="208.4" rx="2.2" ry="4.3" fill="#c3dbf6" transform="rotate(5 561.4 208.4)"/>
<ellipse cx="457" cy="257" rx="15" ry="27" fill="#a9c5e5" transform="rotate(7 457 257)"/>
</g>
<path d="M361 171.5 C363 168.5 371 168 374 171.5 L376 174 L405 143 C414 135 430 125.5 455 116.5 C470 112 490 110 505 110.3 C520 110.8 535 113.5 542.5 118 C546 120 548 124 549.5 131 C554 138 563 147 568.5 153.5 C570.5 160 571.5 172 572.5 185 L573.6 196 C572.5 187 567 180.8 561.5 180.6 C553 181 548 192 545.5 204 C544 211 541.5 218 537.5 226 L478 254.5 C478 240 471 229 462 229 C452 229 447 245 446.5 262 L447.5 278.8 L437.5 276.3 L397.5 274 L360 268 L333.8 259 C327 256 325 250 325.3 245 L327 231.6 C328 224 330 219 332 216.3 L347.4 197.6 L364.5 180 C362 178 360.5 175 361 171.5Z" fill="#b4cfee"/>
<clipPath id="roofc"><path d="M405 143 C414 135 430 125.5 455 116.5 C470 112 490 110 505 110.3 C520 110.8 535 113.5 542.5 118 C546 120 548 123 548.5 125.5 C538 129 525 134 511 140.5 C500 145 488 150 480 153.5 Z"/></clipPath>
<path d="M405 143 C414 135 430 125.5 455 116.5 C470 112 490 110 505 110.3 C520 110.8 535 113.5 542.5 118 C546 120 548 123 548.5 125.5 C538 129 525 134 511 140.5 C500 145 488 150 480 153.5 Z" fill="url(#gRoof)"/>
<g clip-path="url(#roofc)"><path d="M405 143 C414 135 430 125.5 455 116.5 C470 112 490 110 505 110.3 C520 110.8 535 113.5 542.5 118 C546 120 548 123 548.5 125.5 C538 129 525 134 511 140.5 C500 145 488 150 480 153.5 Z" fill="none" stroke="#bcd3ec" stroke-width="5" filter="url(#bl2)" opacity="0.9"/><path d="M480 153.5 C488 150 500 145 511 140.5 C525 134 538 129 548.5 125.5" fill="none" stroke="#c0d7f0" stroke-width="6" filter="url(#bl)" opacity="0.8"/></g>
<path d="M405 143 L480 153.5 C476 166 470 184 465.5 196 C440 196 400 190 367.5 181 C378 168 392 154 405 143Z" fill="url(#gWs)"/>
<path d="M440 148 L456 150.2 L443 194.8 L423 192.5 Z" fill="#bcd3ee" opacity="0.55" filter="url(#bl)"/>
<path d="M405 143 L480 153.5 C476 166 470 184 465.5 196 M405 143 C392 154 378 168 367.5 181" fill="none" stroke="#cbddf1" stroke-width="0.8"/>
<path d="M367.5 181 C400 190 440 196 465.5 196.3 C462 207 452 220 440.5 228.5 L417.5 230 L404 235 C380 229 350 219 332.3 212.3 C338 205 352 192 367.5 181Z" fill="url(#gHood)"/>
<path d="M372 186 C400 194 436 199 458 199.5 C452 210 440 219 426 224 C400 219 360 208 345 203 Z" fill="#9fb9d7" opacity="0.5" filter="url(#bl2)"/>
<path d="M367.5 182.5 C400 191.5 440 197.5 465.5 197.8" fill="none" stroke="#9bb6d5" stroke-width="2.6" opacity="0.75" filter="url(#bl)"/>
<path d="M480 153.5 C488 150 500 145 511 140.5 C525 134 538 129 548.5 125.5 L549.5 131 C554 138 563 147 568.5 153.5 C570.5 160 571.5 172 572.5 185 L573.6 196 C572.5 187 567 180.8 561.5 180.6 C553 181 548 192 545.5 204 C544 211 541.5 218 537.5 226 L478 254.5 C478 240 471 229 462 229 C452 229 447 245 446.5 262 L441 263 L440.5 228.5 C452 220 462 207 465.5 196.3 C470 184 476 166 480 153.5Z" fill="url(#gSide)"/>
<path d="M486 157.2 L510.8 141.5 L521.5 172 L489.5 186.8 C485 178 484.5 166 486 157.2Z" fill="#b7d3f2" stroke="#cfe3f8" stroke-width="0.5"/>
<path d="M513.3 140 C523 135.5 533 131.5 540 129.3 C545 136 548 145 548.8 152.5 L525 171 Z" fill="#b5d1f0" stroke="#cfe3f8" stroke-width="0.5"/>
<path d="M511 141 L524 171.5" stroke="#d6e6f7" stroke-width="0.9" fill="none"/>
<path d="M480 153.5 C476 166 470 184 465.5 196.3" stroke="#c9dcf0" stroke-width="1.1" fill="none"/>
<path d="M489 187.5 L521.5 172.5 L549 152.8" stroke="#a9c2de" stroke-width="0.8" fill="none"/>
<path d="M521.5 172.5 C528 180 530.5 190 529.5 200 C529 212 527 222 525.5 233.5" stroke="#a9c2de" stroke-width="0.6" fill="none"/>
<path d="M468.5 200 C470 215 472 228 473 236" stroke="#aac3df" stroke-width="0.6" fill="none"/>
<path d="M478 254.5 L537.5 226 L540.2 220 L478.5 248Z" fill="#a5c0df"/>
<path d="M480 243 L542 215.5 L540.2 220 L479 248Z" fill="#d0e4f8" opacity="0.8"/>
<path d="M361.2 171.5 C363 168 371 167.8 374 171.2 L375.8 174.6 C372 177.5 367 179 364.6 179.6 C362 177.5 360.8 174.5 361.2 171.5Z" fill="#cfe0f3"/>
<path d="M363 177 C366 176.8 371.5 175 375.5 174.4 L373.5 177.5 L365 180Z" fill="#a8c0db"/>
<path d="M479.5 190.5 C483 186.3 490 185.2 498 186.2 C500.5 187 501.3 189.3 500.3 191.5 C496 194.5 487 195.6 481 195 C478.8 194 478.5 192 479.5 190.5Z" fill="#d3e3f5"/>
<path d="M481 194.8 C487 195.5 496 194.4 500.3 191.6 L499 194.3 C494 196.6 485 197 481.3 196.3Z" fill="#a3bcd9"/>
<path d="M520 185.2 L526.8 183.2 L527.3 185 L521 187.3Z" fill="#d8e7f7"/><path d="M521 187.3L527.3 185L527.3 186L521.5 188.2Z" fill="#9fb8d5"/>
<path d="M332.3 212.3 C350 219 380 229 404 235 L405 243 L406 256 L410 270.5 L437.5 267.8 L447.5 278.8 L437.5 276.3 L397.5 274 L360 268 L333.8 259 C327 256 325 250 325.3 245 L327 231.6 C328 224 330 219 332.3 212.3Z" fill="url(#gFront)"/>
<path d="M404 235 L417.5 230 L440.5 228.5 L441 263 L446.5 262 L447.5 278.8 L437.5 276.3 L410 272 L406 256 L405 243Z" fill="#bad5f2"/>
<path d="M403.5 235 L417.5 230 L440.3 228.6 C440.5 232 439 236 437 238 L426 242.6 L405 243.4Z" fill="#d9e8f8"/>
<path d="M410 236 L420 233.5 L426 236.5 L418 240.5Z" fill="#c2d6ec"/>
<path d="M342.5 224.5 C360 229.5 385 236 403.5 239 L404.5 244.5 C385 242 360 236 342 230.5Z" fill="#a9c2de"/>
<path d="M343 225.8 C360 230.8 385 237.2 403.8 240.3M342.6 228.6 C360 233.6 385 239.8 404.2 243" stroke="#d3e4f6" stroke-width="1" fill="none"/>
<ellipse cx="369.6" cy="235" rx="4.2" ry="4.6" fill="#c9ddf2" stroke="#aac3df" stroke-width="0.6"/>
<path d="M338 249.5 C355 255 380 260 400.5 262 L400 269.5 C380 268 355 263 339.5 257.5Z" fill="#a4bddb"/>
<path d="M338.8 251.6 C356 257 380 261.8 400.4 263.8M339.2 254.3 C356 259.7 380 264.4 400.2 266.4M339.8 257 C356 262.2 380 266.9 400 268.8" stroke="#d0e2f5" stroke-width="0.85" fill="none"/>
<path d="M408 256.5 L436.5 257.3 L437.3 266.8 L411 270Z" fill="#a3bbd7"/>
<path d="M409 259.5L437 259.8M409.8 262.5L437.2 262.3M410.5 265.5L437.3 264.8" stroke="#cfe0f3" stroke-width="0.6" fill="none"/>
<ellipse cx="463" cy="255.5" rx="13.3" ry="26.6" fill="#c3dbf6" transform="rotate(7 463 255.5)"/>
<ellipse cx="463.6" cy="254.6" rx="10" ry="20.6" fill="#a9c5e5" transform="rotate(7 463.6 254.6)"/>
<g transform="rotate(7 463.6 254.6)" stroke="#c9e0f8" stroke-width="2.5" stroke-linecap="round"><path d="M463.6 254.6L463.6 236M463.6 254.6L472.4 248.5M463.6 254.6L469.6 271.6M463.6 254.6L457.6 271.6M463.6 254.6L454.8 248.5"/></g>
<ellipse cx="463.6" cy="254.6" rx="2.4" ry="4.4" fill="#c3dbf6" transform="rotate(7 463.6 254.6)"/>
<path d="M446.5 262 C447 245 452 229 462 229 C471 229 478 240 478 254.5 L480.5 253.3 C480.5 238 473 226.3 462 226.3 C451 226.3 445 243 444.3 262.5Z" fill="#c4dcf6" opacity="0.7"/>
<path d="M537.5 226 C541.5 218 544 211 545.5 204 C548 192 553 181 561.5 180.6 C567 180.8 572.5 187 573.6 196 L573.5 191 C571.5 183.5 567 178.8 561.5 178.6 C552 179 546.5 190 543.6 203 C542 210 539.5 217 535.5 224.6Z" fill="#c6def8" opacity="0.55"/>
<path d="M502 113.3 L505.3 108.8 L506 109.2 L504.8 113.2 L506.5 113.8 L501 114Z" fill="#d3e3f5"/>
<path d="M480 153.5 C488 150 500 145 511 140.5 C525 134 538 129 548.5 125.5 C548 122.5 546 120 542.5 118" stroke="#c3d6ec" stroke-width="1.4" fill="none" opacity="0.85"/>
<path d="M405 143 L480 153.5" stroke="#c4d7ec" stroke-width="0.7" fill="none"/>
<path d="M161 187.6L380.8 222.6L390.4 219.2L170.6 184.2Z" fill="#e6eef2" fill-opacity="0.22"/>
<path d="M380.8 222.6L380.9 353.1L390.5 349.7L390.4 219.2Z" fill="#e6eef2" fill-opacity="0.22"/>
<path d="M380.9 353.1L161.8 313.2L171.4 309.8L390.5 349.7Z" fill="#e6eef2" fill-opacity="0.22"/>
<path d="M161.8 313.2L161 187.6L170.6 184.2L171.4 309.8Z" fill="#e6eef2" fill-opacity="0.22"/>
<path d="M165.8 185.9L385.6 220.9L385.7 351.4L166.6 311.5Z" fill="none" stroke="#f4f6ee" stroke-opacity="0.85" stroke-width="0.6" stroke-dasharray="1.6 1"/>
<path d="M161 187.6L380.8 222.6L380.9 353.1L161.8 313.2ZM170.6 184.2L390.4 219.2L390.5 349.7L171.4 309.8ZM161 187.6L170.6 184.2M380.8 222.6L390.4 219.2M380.9 353.1L390.5 349.7M161.8 313.2L171.4 309.8" fill="none" stroke="#aacbf3" stroke-width="0.95" stroke-linejoin="round"/>
<g fill="#cc38b2"><ellipse cx="165.8" cy="185.9" rx="2.7" ry="2.4" transform="rotate(9.0 165.8 185.9)"/><rect x="174.82" y="186.12" width="5.5" height="3.3" rx="1.2" transform="rotate(9.0 177.57 187.77)"/><rect x="186.63" y="188.01" width="5.5" height="3.3" rx="1.2" transform="rotate(9.0 189.38 189.66)"/><rect x="198.5" y="189.89" width="5.5" height="3.3" rx="1.2" transform="rotate(9.0 201.25 191.54)"/><rect x="210.42" y="191.79" width="5.5" height="3.3" rx="1.2" transform="rotate(9.0 213.17 193.44)"/><rect x="222.39" y="193.7" width="5.5" height="3.3" rx="1.2" transform="rotate(9.0 225.14 195.35)"/><rect x="234.41" y="195.61" width="5.5" height="3.3" rx="1.2" transform="rotate(9.0 237.16 197.26)"/><rect x="246.48" y="197.54" width="5.5" height="3.3" rx="1.2" transform="rotate(9.0 249.23 199.19)"/><rect x="258.61" y="199.47" width="5.5" height="3.3" rx="1.2" transform="rotate(9.0 261.36 201.12)"/><rect x="270.79" y="201.41" width="5.5" height="3.3" rx="1.2" transform="rotate(9.0 273.54 203.06)"/><rect x="283.02" y="203.35" width="5.5" height="3.3" rx="1.2" transform="rotate(9.0 285.77 205)"/><rect x="295.31" y="205.31" width="5.5" height="3.3" rx="1.2" transform="rotate(9.0 298.06 206.96)"/><rect x="307.65" y="207.28" width="5.5" height="3.3" rx="1.2" transform="rotate(9.0 310.4 208.93)"/><rect x="320.05" y="209.25" width="5.5" height="3.3" rx="1.2" transform="rotate(9.0 322.8 210.9)"/><rect x="332.5" y="211.23" width="5.5" height="3.3" rx="1.2" transform="rotate(9.0 335.25 212.88)"/><rect x="345" y="213.22" width="5.5" height="3.3" rx="1.2" transform="rotate(9.0 347.75 214.87)"/><rect x="357.56" y="215.22" width="5.5" height="3.3" rx="1.2" transform="rotate(9.0 360.31 216.87)"/><rect x="370.18" y="217.23" width="5.5" height="3.3" rx="1.2" transform="rotate(9.0 372.93 218.88)"/><ellipse cx="385.6" cy="220.9" rx="2.7" ry="2.4" transform="rotate(9.0 385.6 220.9)"/><circle cx="165.89" cy="199.9" r="2.85"/><circle cx="177.65" cy="201.8" r="2.85"/><circle cx="189.46" cy="203.71" r="2.85"/><circle cx="201.33" cy="205.63" r="2.85"/><circle cx="213.24" cy="207.56" r="2.85"/><circle cx="225.21" cy="209.49" r="2.85"/><circle cx="237.22" cy="211.44" r="2.85"/><circle cx="249.29" cy="213.39" r="2.85"/><circle cx="261.42" cy="215.35" r="2.85"/><circle cx="273.59" cy="217.32" r="2.85"/><circle cx="285.82" cy="219.3" r="2.85"/><circle cx="298.1" cy="221.29" r="2.85"/><circle cx="310.44" cy="223.28" r="2.85"/><circle cx="322.83" cy="225.29" r="2.85"/><circle cx="335.28" cy="227.3" r="2.85"/><circle cx="347.78" cy="229.32" r="2.85"/><circle cx="360.33" cy="231.35" r="2.85"/><circle cx="372.94" cy="233.39" r="2.85"/><circle cx="385.61" cy="235.44" r="2.85"/><circle cx="165.98" cy="213.88" r="2.85"/><circle cx="177.74" cy="215.81" r="2.85"/><circle cx="189.54" cy="217.75" r="2.85"/><circle cx="201.4" cy="219.7" r="2.85"/><circle cx="213.31" cy="221.66" r="2.85"/><circle cx="225.28" cy="223.63" r="2.85"/><circle cx="237.29" cy="225.6" r="2.85"/><circle cx="249.35" cy="227.58" r="2.85"/><circle cx="261.47" cy="229.57" r="2.85"/><circle cx="273.64" cy="231.57" r="2.85"/><circle cx="285.87" cy="233.58" r="2.85"/><circle cx="298.15" cy="235.6" r="2.85"/><circle cx="310.48" cy="237.63" r="2.85"/><circle cx="322.86" cy="239.66" r="2.85"/><circle cx="335.31" cy="241.71" r="2.85"/><circle cx="347.8" cy="243.76" r="2.85"/><circle cx="360.35" cy="245.82" r="2.85"/><circle cx="372.96" cy="247.89" r="2.85"/><circle cx="385.62" cy="249.98" r="2.85"/><circle cx="166.07" cy="227.86" r="2.85"/><circle cx="177.82" cy="229.82" r="2.85"/><circle cx="189.63" cy="231.79" r="2.85"/><circle cx="201.48" cy="233.77" r="2.85"/><circle cx="213.39" cy="235.75" r="2.85"/><circle cx="225.34" cy="237.75" r="2.85"/><circle cx="237.35" cy="239.75" r="2.85"/><circle cx="249.42" cy="241.77" r="2.85"/><circle cx="261.53" cy="243.79" r="2.85"/><circle cx="273.7" cy="245.82" r="2.85"/><circle cx="285.92" cy="247.86" r="2.85"/><circle cx="298.19" cy="249.9" r="2.85"/><circle cx="310.52" cy="251.96" r="2.85"/><circle cx="322.9" cy="254.03" r="2.85"/><circle cx="335.34" cy="256.1" r="2.85"/><circle cx="347.83" cy="258.19" r="2.85"/><circle cx="360.37" cy="260.28" r="2.85"/><circle cx="372.98" cy="262.38" r="2.85"/><circle cx="385.63" cy="264.5" r="2.85"/><circle cx="166.16" cy="241.82" r="2.85"/><circle cx="177.91" cy="243.81" r="2.85"/><circle cx="189.71" cy="245.81" r="2.85"/><circle cx="201.56" cy="247.82" r="2.85"/><circle cx="213.46" cy="249.84" r="2.85"/><circle cx="225.41" cy="251.86" r="2.85"/><circle cx="237.42" cy="253.89" r="2.85"/><circle cx="249.48" cy="255.94" r="2.85"/><circle cx="261.59" cy="257.99" r="2.85"/><circle cx="273.75" cy="260.05" r="2.85"/><circle cx="285.96" cy="262.12" r="2.85"/><circle cx="298.23" cy="264.2" r="2.85"/><circle cx="310.56" cy="266.29" r="2.85"/><circle cx="322.93" cy="268.38" r="2.85"/><circle cx="335.36" cy="270.49" r="2.85"/><circle cx="347.85" cy="272.6" r="2.85"/><circle cx="360.39" cy="274.73" r="2.85"/><circle cx="372.99" cy="276.86" r="2.85"/><circle cx="385.64" cy="279.01" r="2.85"/><circle cx="166.25" cy="255.78" r="2.85"/><circle cx="177.99" cy="257.8" r="2.85"/><circle cx="189.79" cy="259.83" r="2.85"/><circle cx="201.63" cy="261.86" r="2.85"/><circle cx="213.53" cy="263.91" r="2.85"/><circle cx="225.48" cy="265.96" r="2.85"/><circle cx="237.48" cy="268.03" r="2.85"/><circle cx="249.54" cy="270.1" r="2.85"/><circle cx="261.64" cy="272.18" r="2.85"/><circle cx="273.8" cy="274.27" r="2.85"/><circle cx="286.01" cy="276.37" r="2.85"/><circle cx="298.28" cy="278.48" r="2.85"/><circle cx="310.59" cy="280.6" r="2.85"/><circle cx="322.97" cy="282.73" r="2.85"/><circle cx="335.39" cy="284.86" r="2.85"/><circle cx="347.88" cy="287.01" r="2.85"/><circle cx="360.41" cy="289.17" r="2.85"/><circle cx="373.01" cy="291.33" r="2.85"/><circle cx="385.66" cy="293.51" r="2.85"/><circle cx="166.33" cy="269.72" r="2.85"/><circle cx="178.08" cy="271.77" r="2.85"/><circle cx="189.87" cy="273.83" r="2.85"/><circle cx="201.71" cy="275.9" r="2.85"/><circle cx="213.6" cy="277.97" r="2.85"/><circle cx="225.55" cy="280.06" r="2.85"/><circle cx="237.55" cy="282.15" r="2.85"/><circle cx="249.6" cy="284.25" r="2.85"/><circle cx="261.7" cy="286.36" r="2.85"/><circle cx="273.85" cy="288.48" r="2.85"/><circle cx="286.06" cy="290.61" r="2.85"/><circle cx="298.32" cy="292.75" r="2.85"/><circle cx="310.63" cy="294.9" r="2.85"/><circle cx="323" cy="297.06" r="2.85"/><circle cx="335.42" cy="299.23" r="2.85"/><circle cx="347.9" cy="301.41" r="2.85"/><circle cx="360.43" cy="303.59" r="2.85"/><circle cx="373.02" cy="305.79" r="2.85"/><circle cx="385.67" cy="308" r="2.85"/><circle cx="166.42" cy="283.66" r="2.85"/><circle cx="178.16" cy="285.74" r="2.85"/><circle cx="189.95" cy="287.82" r="2.85"/><circle cx="201.79" cy="289.92" r="2.85"/><circle cx="213.68" cy="292.02" r="2.85"/><circle cx="225.62" cy="294.14" r="2.85"/><circle cx="237.61" cy="296.26" r="2.85"/><circle cx="249.66" cy="298.39" r="2.85"/><circle cx="261.75" cy="300.54" r="2.85"/><circle cx="273.9" cy="302.69" r="2.85"/><circle cx="286.1" cy="304.85" r="2.85"/><circle cx="298.36" cy="307.02" r="2.85"/><circle cx="310.67" cy="309.2" r="2.85"/><circle cx="323.03" cy="311.38" r="2.85"/><circle cx="335.45" cy="313.58" r="2.85"/><circle cx="347.93" cy="315.79" r="2.85"/><circle cx="360.45" cy="318.01" r="2.85"/><circle cx="373.04" cy="320.24" r="2.85"/><circle cx="385.68" cy="322.48" r="2.85"/><circle cx="166.51" cy="297.58" r="2.85"/><circle cx="178.25" cy="299.69" r="2.85"/><circle cx="190.03" cy="301.81" r="2.85"/><circle cx="201.86" cy="303.93" r="2.85"/><circle cx="213.75" cy="306.07" r="2.85"/><circle cx="225.69" cy="308.21" r="2.85"/><circle cx="237.67" cy="310.36" r="2.85"/><circle cx="249.72" cy="312.53" r="2.85"/><circle cx="261.81" cy="314.7" r="2.85"/><circle cx="273.95" cy="316.88" r="2.85"/><circle cx="286.15" cy="319.07" r="2.85"/><circle cx="298.4" cy="321.27" r="2.85"/><circle cx="310.71" cy="323.48" r="2.85"/><circle cx="323.07" cy="325.7" r="2.85"/><circle cx="335.48" cy="327.93" r="2.85"/><circle cx="347.95" cy="330.17" r="2.85"/><circle cx="360.47" cy="332.42" r="2.85"/><circle cx="373.05" cy="334.67" r="2.85"/><circle cx="385.69" cy="336.94" r="2.85"/><ellipse cx="166.6" cy="311.5" rx="2.7" ry="2.4" transform="rotate(10.3 166.6 311.5)"/><rect x="175.58" y="311.99" width="5.5" height="3.3" rx="1.2" transform="rotate(10.3 178.33 313.64)"/><rect x="187.36" y="314.13" width="5.5" height="3.3" rx="1.2" transform="rotate(10.3 190.11 315.78)"/><rect x="199.19" y="316.29" width="5.5" height="3.3" rx="1.2" transform="rotate(10.3 201.94 317.94)"/><rect x="211.07" y="318.45" width="5.5" height="3.3" rx="1.2" transform="rotate(10.3 213.82 320.1)"/><rect x="223" y="320.62" width="5.5" height="3.3" rx="1.2" transform="rotate(10.3 225.75 322.27)"/><rect x="234.99" y="322.81" width="5.5" height="3.3" rx="1.2" transform="rotate(10.3 237.74 324.46)"/><rect x="247.03" y="325" width="5.5" height="3.3" rx="1.2" transform="rotate(10.3 249.78 326.65)"/><rect x="259.11" y="327.2" width="5.5" height="3.3" rx="1.2" transform="rotate(10.3 261.86 328.85)"/><rect x="271.26" y="329.41" width="5.5" height="3.3" rx="1.2" transform="rotate(10.3 274.01 331.06)"/><rect x="283.45" y="331.63" width="5.5" height="3.3" rx="1.2" transform="rotate(10.3 286.2 333.28)"/><rect x="295.7" y="333.86" width="5.5" height="3.3" rx="1.2" transform="rotate(10.3 298.45 335.51)"/><rect x="308" y="336.1" width="5.5" height="3.3" rx="1.2" transform="rotate(10.3 310.75 337.75)"/><rect x="320.35" y="338.35" width="5.5" height="3.3" rx="1.2" transform="rotate(10.3 323.1 340)"/><rect x="332.76" y="340.61" width="5.5" height="3.3" rx="1.2" transform="rotate(10.3 335.51 342.26)"/><rect x="345.23" y="342.88" width="5.5" height="3.3" rx="1.2" transform="rotate(10.3 347.98 344.53)"/><rect x="357.75" y="345.16" width="5.5" height="3.3" rx="1.2" transform="rotate(10.3 360.5 346.81)"/><rect x="370.32" y="347.45" width="5.5" height="3.3" rx="1.2" transform="rotate(10.3 373.07 349.1)"/><ellipse cx="385.7" cy="351.4" rx="2.7" ry="2.4" transform="rotate(10.3 385.7 351.4)"/></g>
<g fill="none" stroke="#2e2eee" stroke-width="1.6" stroke-linecap="round"><path d="M153.7 184 C154.2 177 158.5 172.4 165.6 172.2"/><path d="M385.6 206.7 C392.5 208.3 397.3 214 398.6 222.6"/><path d="M155.8 309.8 C156.3 317.5 160.5 323 167.6 325.3"/><path d="M398.6 353.6 C398 360.5 393 364.8 385.6 365.4"/></g>
<g fill="none" stroke="#ee2c1c" stroke-width="1.3" stroke-linecap="round"><path d="M269.2 190.8 C264.5 194.5 261.8 200.5 261.3 208"/><path d="M277.5 187.7 C282.2 189 285.3 192.8 285.9 198.2"/></g>
<path d="M273.4 187.4 L275.3 193 L274 193 L274 199 L272.8 199 L272.8 193 L271.5 193Z" fill="#20dc30"/><rect x="271.2" y="199" width="4.4" height="4.4" fill="#30e040"/>
<g fill="none" stroke="#ee2c1c" stroke-width="1.3" stroke-linecap="round"><path d="M262.5 337.1 C263 343.5 265.5 346.8 270.3 347.2"/><path d="M286.7 325.8 C286.6 333.5 283.8 339.6 278.8 343"/></g>
<rect x="272.6" y="330.8" width="4.2" height="4.2" fill="#30e040"/><path d="M274.7 346.2 L272.8 340.6 L274.1 340.6 L274.1 335 L275.3 335 L275.3 340.6 L276.6 340.6Z" fill="#20dc30"/>
<g fill="none" stroke="#20e030" stroke-width="1.3" stroke-linecap="round"><path d="M178.8 244.1 C172 242.8 164.5 243 159.5 244.5"/><path d="M149.4 249.2 C146.5 250.6 148.5 253.5 154 254.6"/></g>
<path d="M153 247.1 L159.3 245.6 L159.5 250.2Z" fill="#f03828"/><rect x="163" y="246.8" width="4.4" height="4.6" fill="#f03828"/><path d="M159 247.6H163V248.8H159Z" fill="#f03828"/>
<g fill="none" stroke="#20e030" stroke-width="1.3" stroke-linecap="round"><path d="M374.7 292 C381 293.3 389 292.8 394 290.5"/><path d="M397.7 280.9 C402 281.3 405.5 283.6 402.5 286.8"/></g>
<rect x="385.2" y="284.4" width="4.4" height="4.6" fill="#f03828"/><path d="M399.6 288.2 L393.3 285.8 L393.2 290.4Z" fill="#f03828"/><path d="M389.6 286.8H393.5V288H389.6Z" fill="#f03828"/>
<g stroke="#2a34d6" stroke-width="0.8" stroke-linecap="round"><path d="M262 272.9L269.7 269.3"/><path d="M278.3 265.6L286.5 262"/></g>
<path d="M261 273.6 L265.3 269.8 L266.5 272.6Z" fill="#2a34d6" stroke="#2a34d6" stroke-width="0.8" stroke-linejoin="round"/><path d="M287.3 261.5 L283 265.2 L281.8 262.5Z" fill="#2a34d6" stroke="#2a34d6" stroke-width="0.8" stroke-linejoin="round"/>
<path d="M101 331.1L434.6 393.6" stroke="#fb0a0a" stroke-width="1.7" fill="none"/>
<path d="M101 379.6L184.3 373.2L197.5 394" stroke="#f03030" stroke-width="0.5" fill="none"/>
<path d="M101 384.4L112.6 386.8L101 391.4" stroke="#f03030" stroke-width="0.5" fill="none"/>
<g stroke-linecap="round"><path d="M128.5 363.4L128.5 350.5" stroke="#1010e8" stroke-width="0.8"/><path d="M128.5 349.2L129.9 353.6L127.1 353.6Z" fill="#0a0a90"/><path d="M128.5 363.4L118.5 362.1" stroke="#10d020" stroke-width="0.8"/><path d="M116.3 361.7L120.6 360.8L120.3 363.4Z" fill="#0a5a10"/><path d="M128.5 363.4L135.3 360.4" stroke="#e81010" stroke-width="0.8"/><path d="M137.2 359.6L134 362.3L133 360Z" fill="#701010"/></g><text x="127.4" y="346.4" font-size="3.3" font-weight="bold" fill="#2a2ae0" font-family="Liberation Sans, sans-serif">Z</text><text x="111.5" y="361.4" font-size="3.3" font-weight="bold" fill="#28c838" font-family="Liberation Sans, sans-serif">Y</text><text x="138.3" y="359.6" font-size="3.3" font-weight="bold" fill="#e83030" font-family="Liberation Sans, sans-serif">X</text>
<text transform="translate(103.8 37) rotate(0.03)" font-size="4.21" fill="#1a1a9c" font-family="Liberation Sans, sans-serif">Wind Tunnel Dimensions: Dx = 15.599 m, Dy = 12.999 m, Dz = 7.071 m</text>
</g>
</svg>

<div class="abs" style="left:679.40px;top:30.20px;width:1.60px;height:364.00px;background:#f0f0f0;"></div>
<div class="abs" style="left:681.00px;top:30.20px;width:79.00px;height:363.60px;background:#fff;"></div>
<div class="abs" style="left:681.00px;top:30.20px;width:79.00px;height:6.70px;background:linear-gradient(#a9c1de,#98b4d4);"></div>
<span class="t" style="top:30px;transform:translateY(0.96px) rotate(0.03deg);font-size:4.35px;line-height:5.22px;color:#101820;left:682.30px;letter-spacing:-0.097px;">Edit Bar - Model</span>
<div class="abs" style="left:749.60px;top:31.20px;width:4.20px;height:4.60px;background:#e9eef7;border:0.35px solid #8196b6;box-sizing:border-box;"></div>
<div class="abs" style="left:754.50px;top:31.20px;width:4.20px;height:4.60px;background:#e9eef7;border:0.35px solid #8196b6;box-sizing:border-box;"></div>
<svg class="abs" style="left:749.6px;top:31.2px" width="9.2" height="4.6" viewBox="0 0 9.2 4.6"><path d="M1.7 1V3.2M2.6 1V3.2M1.2 3.2H3.1M2.15 3.2V4" stroke="#223" stroke-width="0.4" fill="none"/><path d="M6.1 1.6L7.7 3M7.7 1.6L6.1 3" stroke="#223" stroke-width="0.45"/></svg>
<div class="abs" style="left:680.90px;top:37.40px;width:78.30px;height:99.20px;border:1.5px solid #0a0af0;box-sizing:border-box;border-radius:1.4px;background:#f0f0f0;"></div>
<div class="abs" style="left:682.20px;top:38.80px;width:75.60px;height:6.40px;background:linear-gradient(#fdfdff,#dfe1ea);"></div>
<span class="t" style="top:39px;transform:translateY(0.46px) rotate(0.03deg);font-size:4.35px;line-height:5.22px;color:#6f7688;left:683.00px;letter-spacing:-0.088px;">Point Cloud</span>
<svg class="abs" style="left:753.6px;top:41px" width="3" height="2.4" viewBox="0 0 3 2.4"><path d="M0.2 0.3H2.8L1.5 2.1Z" fill="#6a7080"/></svg>
<div class="abs" style="left:684.30px;top:51.00px;width:71.60px;height:48.40px;border:0.4px solid #e2e2e2;box-sizing:border-box;"></div>
<span class="t" style="top:48px;transform:translateY(0.36px) rotate(0.03deg);font-size:4.35px;line-height:5.22px;color:#111;left:686.80px;background:#f0f0f0;padding:0 0.6px;letter-spacing:-0.125px;">Point Cloud Type</span>
<span class="t" style="top:57px;transform:translateY(0.66px) rotate(0.03deg);font-size:4.35px;line-height:5.22px;color:#111;left:687.40px;letter-spacing:0.054px;">Type:</span>
<div class="abs" style="left:707.20px;top:56.40px;width:45.50px;height:8.30px;background:#d6e8fa;border:0.5px solid #2f7fd6;box-sizing:border-box;border-radius:0.6px;"></div>
<span class="t" style="top:57px;transform:translateY(0.96px) rotate(0.03deg);font-size:4.35px;line-height:5.22px;color:#111;left:708.60px;letter-spacing:-0.085px;">Rectangle</span>
<svg class="abs" style="left:747px;top:59px" width="4" height="3" viewBox="0 0 4 3"><path d="M0.5 0.6L2 2.2L3.5 0.6" fill="none" stroke="#555" stroke-width="0.45"/></svg>
<div class="abs" style="left:707.20px;top:64.60px;width:45.50px;height:11.20px;background:#fff;border:0.5px solid #2a78d0;box-sizing:border-box;"></div>
<div class="abs" style="left:707.70px;top:65.10px;width:44.50px;height:5.20px;background:#1269cf;"></div>
<span class="t" style="top:65px;transform:translateY(0.06px) rotate(0.03deg);font-size:4.35px;line-height:5.22px;color:#cfe4ff;left:708.60px;letter-spacing:-0.170px;">Segment</span>
<span class="t" style="top:70px;transform:translateY(0.36px) rotate(0.03deg);font-size:4.35px;line-height:5.22px;color:#111;left:708.60px;letter-spacing:-0.085px;">Rectangle</span>
<svg class="abs" style="left:739.6px;top:66.6px" width="5" height="7.4" viewBox="0 0 10 15"><path d="M1 0.8V12L3.8 9.4L5.8 14L7.6 13.2L5.6 8.8H9.3Z" fill="#fff" stroke="#111" stroke-width="0.9"/></svg>
<span class="t" style="top:82px;transform:translateY(0.66px) rotate(0.03deg);font-size:4.35px;line-height:5.22px;color:#111;left:687.30px;letter-spacing:-0.101px;">Min</span>
<span class="t" style="top:82px;transform:translateY(0.66px) rotate(0.03deg);font-size:4.35px;line-height:5.22px;color:#111;left:709.85px;letter-spacing:-0.115px;">190 points</span>
<span class="t" style="top:82px;transform:translateY(0.66px) rotate(0.03deg);font-size:4.35px;line-height:5.22px;color:#111;left:744.50px;letter-spacing:-0.107px;">Max</span>
<div class="abs" style="left:687.60px;top:91.20px;width:64.60px;height:0.70px;background:#d8d8d8;"></div>
<div class="abs" style="left:699.70px;top:88.70px;width:2.40px;height:5.40px;background:#0a64d8;"></div>
<div class="abs" style="left:684.20px;top:103.40px;width:72.00px;height:8.30px;background:#e4e4e4;border:0.7px solid #3a8ee0;box-sizing:border-box;border-radius:0.5px;"></div>
<span class="t" style="top:105px;transform:translateY(0.01px) rotate(0.03deg);font-size:4.35px;line-height:5.22px;color:#111;left:717.05px;letter-spacing:0.008px;">OK</span>
<div class="abs" style="left:684.20px;top:113.70px;width:72.00px;height:7.90px;background:#e4e4e4;border:0.4px solid #bdbdbd;box-sizing:border-box;border-radius:0.5px;"></div>
<span class="t" style="top:115px;transform:translateY(0.11px) rotate(0.03deg);font-size:4.35px;line-height:5.22px;color:#111;left:713.75px;letter-spacing:-0.106px;">Cancel</span>
<div class="abs" style="left:684.20px;top:123.90px;width:72.00px;height:8.30px;background:#e4e4e4;border:0.4px solid #bdbdbd;box-sizing:border-box;border-radius:0.5px;"></div>
<span class="t" style="top:125px;transform:translateY(0.51px) rotate(0.03deg);font-size:4.35px;line-height:5.22px;color:#111;left:714.50px;letter-spacing:0.008px;">Reset</span>
<div class="abs" style="left:681.60px;top:138.20px;width:77.00px;height:6.40px;background:linear-gradient(#fdfdff,#dfe1ea);"></div>
<span class="t" style="top:138px;transform:translateY(0.86px) rotate(0.03deg);font-size:4.35px;line-height:5.22px;color:#6f7688;left:683.00px;letter-spacing:-0.185px;">Help</span>
<svg class="abs" style="left:753.6px;top:140.4px" width="3" height="2.4" viewBox="0 0 3 2.4"><path d="M0.2 0.3H2.8L1.5 2.1Z" fill="#6a7080"/></svg>
<div class="abs" style="left:681.60px;top:144.60px;width:77.00px;height:12.90px;background:#ffffe4;"></div>
<svg class="abs" style="left:683.4px;top:148.5px" width="6" height="6" viewBox="0 0 12 12"><circle cx="6" cy="6" r="5.6" fill="#f39a1e"/><circle cx="6" cy="6" r="4.6" fill="#f7ab35"/><rect x="5.2" y="2.4" width="1.6" height="4.8" fill="#fff"/><rect x="5.2" y="8" width="1.6" height="1.6" fill="#fff"/></svg>
<span class="t" style="top:146px;transform:translateY(0.16px) rotate(0.03deg);font-size:4.35px;line-height:5.22px;color:#111;left:691.80px;letter-spacing:-0.042px;">Press Esc or right mouse button to</span>
<span class="t" style="top:151px;transform:translateY(0.46px) rotate(0.03deg);font-size:4.35px;line-height:5.22px;color:#111;left:691.80px;letter-spacing:-0.039px;">cancel the tool.</span>
<div class="abs" style="left:0.00px;top:394.00px;width:760.00px;height:9.60px;background:#f0f0f0;"></div>
<div class="abs" style="left:0.00px;top:403.60px;width:760.00px;height:8.40px;background:#f0f0f0;"></div>
<div class="abs" style="left:1.00px;top:393.60px;width:20.00px;height:9.20px;background:#fdfdfd;border:0.4px solid #a6a6a6;border-top:none;box-sizing:border-box;border-radius:0 0 1px 1px;box-shadow:0.3px 0.4px 0 #8a8a8a;"></div><svg class="abs" style="left:2.6px;top:395.4px" width="5.5" height="6" viewBox="0 0 10 11"><rect x="0.5" y="0.5" width="3" height="2.6" fill="#e8b030"/><rect x="3.5" y="4.2" width="3" height="2.6" fill="#e8b030"/><rect x="3.5" y="7.9" width="3" height="2.6" fill="#3f77d0"/><path d="M2 3V9.2H3.5M2 5.5H3.5" stroke="#666" stroke-width="0.6" fill="none"/></svg><span class="t" style="top:395px;transform:translateY(0.86px) rotate(0.03deg);font-size:4.35px;line-height:5.22px;color:#111;left:9.70px;letter-spacing:-0.098px;">Data</span>
<div class="abs" style="left:22.00px;top:394.40px;width:19.30px;height:8.20px;background:#f4f4f4;border:0.4px solid #9c9c9c;box-sizing:border-box;border-radius:0 0 1px 1px;box-shadow:0.3px 0.4px 0 #999;"></div><svg class="abs" style="left:23.6px;top:395.4px" width="6" height="6" viewBox="0 0 11 11"><path d="M0.5 5.5Q5.5 0.5 10.5 5.5Q5.5 9 0.5 5.5Z" fill="#dfe6f5" stroke="#334" stroke-width="0.8"/><circle cx="5.5" cy="5" r="1.9" fill="#223a7a"/></svg><span class="t" style="top:395px;transform:translateY(0.86px) rotate(0.03deg);font-size:4.35px;line-height:5.22px;color:#111;left:30.70px;letter-spacing:0.038px;">View</span>
<div class="abs" style="left:42.30px;top:394.40px;width:28.00px;height:8.20px;background:#f4f4f4;border:0.4px solid #9c9c9c;box-sizing:border-box;border-radius:0 0 1px 1px;box-shadow:0.3px 0.4px 0 #999;"></div><svg class="abs" style="left:43.9px;top:395.4px" width="6" height="6" viewBox="0 0 11 11"><path d="M1 4L4 1.5H10V7L7 9.8H1Z" fill="#2f6fd8"/><path d="M1 4H7V9.8H1Z" fill="#5a95ee"/><path d="M1 4L4 1.5H10L7 4Z" fill="#8bb7f5"/></svg><span class="t" style="top:395px;transform:translateY(0.86px) rotate(0.03deg);font-size:4.35px;line-height:5.22px;color:#111;left:51.00px;letter-spacing:0.041px;">Sections</span>
<div class="abs" style="left:102.00px;top:393.60px;width:24.00px;height:9.20px;background:#fdfdfd;border:0.4px solid #a6a6a6;border-top:none;box-sizing:border-box;border-radius:0 0 1px 1px;box-shadow:0.3px 0.4px 0 #8a8a8a;"></div><svg class="abs" style="left:103.6px;top:395.4px" width="5" height="6" viewBox="0 0 9 11"><circle cx="4.5" cy="2.3" r="1.7" fill="#2f6fd8"/><path d="M4.5 3.6L7.8 10H1.2Z" fill="#3f86ea"/><rect x="0.5" y="9.3" width="8" height="1.2" fill="#2458b8"/></svg><span class="t" style="top:395px;transform:translateY(0.86px) rotate(0.03deg);font-size:4.35px;line-height:5.22px;color:#111;left:110.70px;letter-spacing:0.271px;">Model</span>
<div class="abs" style="left:127.00px;top:394.40px;width:22.30px;height:8.20px;background:#f4f4f4;border:0.4px solid #9c9c9c;box-sizing:border-box;border-radius:0 0 1px 1px;box-shadow:0.3px 0.4px 0 #999;"></div><svg class="abs" style="left:128.6px;top:395.4px" width="5" height="6" viewBox="0 0 9 11"><circle cx="4.5" cy="2.3" r="1.7" fill="#f0a020"/><path d="M4.5 3.6L7.8 10H1.2Z" fill="#f2a93a"/><rect x="0.5" y="9.3" width="8" height="1.2" fill="#2458b8"/></svg><span class="t" style="top:395px;transform:translateY(0.86px) rotate(0.03deg);font-size:4.35px;line-height:5.22px;color:#111;left:135.70px;letter-spacing:0.104px;">Zones</span>
<div class="abs" style="left:150.30px;top:394.40px;width:32.00px;height:8.20px;background:#f4f4f4;border:0.4px solid #9c9c9c;box-sizing:border-box;border-radius:0 0 1px 1px;box-shadow:0.3px 0.4px 0 #999;"></div><svg class="abs" style="left:151.9px;top:395.4px" width="5.6" height="6" viewBox="0 0 10 11"><rect x="0" y="0" width="10" height="11" fill="#f3a338"/><circle cx="5" cy="3" r="1.6" fill="#2f6fd8"/><path d="M5 4.3L8 10H2Z" fill="#3f86ea"/></svg><span class="t" style="top:395px;transform:translateY(0.86px) rotate(0.03deg);font-size:4.35px;line-height:5.22px;color:#111;left:159.00px;letter-spacing:0.112px;">Simulation</span>
<div class="abs" style="left:682.00px;top:393.60px;width:26.30px;height:9.20px;background:#fdfdfd;border:0.4px solid #a6a6a6;border-top:none;box-sizing:border-box;border-radius:0 0 1px 1px;box-shadow:0.3px 0.4px 0 #8a8a8a;"></div><svg class="abs" style="left:683.6px;top:395.4px" width="6" height="6" viewBox="0 0 11 11"><path d="M1 9L3 3L9 1.5L7 7.5Z" fill="#e8eefc" stroke="#667" stroke-width="0.6"/><path d="M2 10L8.5 3.5" stroke="#d09020" stroke-width="1.2"/><circle cx="3" cy="3" r="1" fill="#c33"/></svg><span class="t" style="top:395px;transform:translateY(0.86px) rotate(0.03deg);font-size:4.35px;line-height:5.22px;color:#111;left:690.70px;letter-spacing:0.043px;">Edit Bar</span>
<div class="abs" style="left:709.20px;top:394.40px;width:25.10px;height:8.20px;background:#f4f4f4;border:0.4px solid #9c9c9c;box-sizing:border-box;border-radius:0 0 1px 1px;box-shadow:0.3px 0.4px 0 #999;"></div><svg class="abs" style="left:710.8000000000001px;top:395.2px" width="5.4" height="6.4" viewBox="0 0 10 12"><path d="M1 4L5 1V9L1 11.5Z" fill="#2a62d8"/><path d="M5 1L9 0.5V7L5 9Z" fill="#e03020"/><path d="M3 2.6L6 1.5V10L3 11Z" fill="#5a9af0" opacity="0.8"/></svg><span class="t" style="top:395px;transform:translateY(0.86px) rotate(0.03deg);font-size:4.35px;line-height:5.22px;color:#111;left:717.90px;letter-spacing:0.190px;">Clipper</span>
<div class="abs" style="left:679.00px;top:404.20px;width:0.50px;height:7.80px;background:#d9d9d9;"></div>
<div class="abs" style="left:704.30px;top:404.20px;width:0.50px;height:7.80px;background:#d9d9d9;"></div>
<div class="abs" style="left:733.80px;top:404.20px;width:0.50px;height:7.80px;background:#d9d9d9;"></div>
<svg class="abs" style="left:630px;top:36px" width="60" height="36" viewBox="630 36 60 36"><path d="M636.3 42.6L677.5 62.3" stroke="#0a12e8" stroke-width="1.4" fill="none"/><path d="M682.3 64.6L673.6 64.3L676.3 58.8Z" fill="#0a12e8"/></svg>
</body></html>
